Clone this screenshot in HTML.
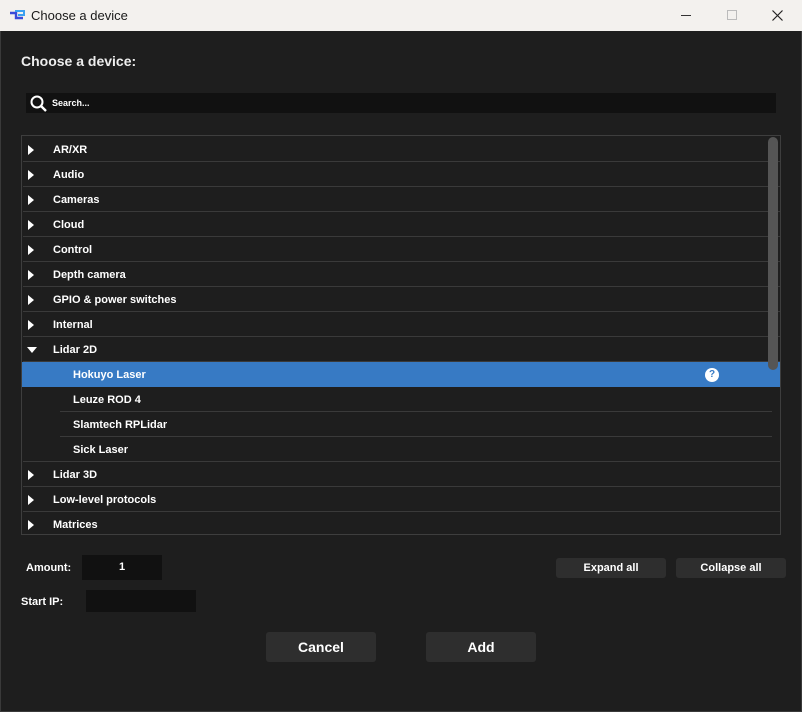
<!DOCTYPE html>
<html><head><style>
*{margin:0;padding:0;box-sizing:border-box}
body{width:802px;height:712px;background:#1e1e1e;font-family:"Liberation Sans",sans-serif;position:relative;overflow:hidden;color:#fff}
.title{position:absolute;left:0;top:0;width:802px;height:31px;background:#f3f1ee;color:#1a1a1a;font-size:13px}
.abs{position:absolute}
.row{position:absolute;left:23px;width:757px;height:25px;border-bottom:1px solid #3a3a3a;font-size:11px;font-weight:bold;line-height:27px}
.row span{position:absolute;left:30px}
.tri{position:absolute;left:5px;top:8px;width:0;height:0;border-top:5px solid transparent;border-bottom:5px solid transparent;border-left:6px solid #fff}
.sub{left:60px;width:712px}
.sub span{left:13px}
.btn{position:absolute;background:#2e2e2e;border-radius:3px;font-size:11px;font-weight:bold;text-align:center}
</style></head><body>
<div class="title">
 <svg class="abs" style="left:9px;top:9px" width="16" height="11" viewBox="0 0 16 11"><path d="M1 4h6v5h7" stroke="#3a4bd8" stroke-width="2.4" fill="none"/><path d="M6 2h9v4H9" stroke="#3aa0f0" stroke-width="2" fill="none"/></svg>
 <div class="abs" style="left:31px;top:8px">Choose a device</div>
 <div class="abs" style="left:681px;top:15px;width:10px;height:1px;background:#333"></div>
 <div class="abs" style="left:727px;top:10px;width:10px;height:10px;border:1px solid #bbb"></div>
 <svg class="abs" style="left:772px;top:10px" width="11" height="11"><path d="M0.5 0.5l10 10M10.5 0.5l-10 10" stroke="#222" stroke-width="1.2"/></svg>
</div>
<div class="abs" style="left:0;top:31px;width:802px;height:681px;border:1px solid #3a3a3a;border-top:none"></div>
<div class="abs" style="left:21px;top:53px;font-size:14px;font-weight:bold;color:#eee">Choose a device:</div>
<div class="abs" style="left:26px;top:93px;width:750px;height:20px;background:#111"></div>
<svg class="abs" style="left:30px;top:95px" width="18" height="17"><circle cx="7" cy="7" r="5.5" stroke="#fff" stroke-width="2" fill="none"/><path d="M11 11l5 5" stroke="#fff" stroke-width="2.4"/></svg>
<div class="abs" style="left:52px;top:98px;font-size:9px;font-weight:bold">Search...</div>
<div class="abs" style="left:21px;top:135px;width:760px;height:400px;border:1px solid #3e3e3e"></div>
<div class="row" style="top:137px"><i class="tri"></i><span>AR/XR</span></div>
<div class="row" style="top:162px"><i class="tri"></i><span>Audio</span></div>
<div class="row" style="top:187px"><i class="tri"></i><span>Cameras</span></div>
<div class="row" style="top:212px"><i class="tri"></i><span>Cloud</span></div>
<div class="row" style="top:237px"><i class="tri"></i><span>Control</span></div>
<div class="row" style="top:262px"><i class="tri"></i><span>Depth camera</span></div>
<div class="row" style="top:287px"><i class="tri"></i><span>GPIO &amp; power switches</span></div>
<div class="row" style="top:312px"><i class="tri"></i><span>Internal</span></div>
<div class="row" style="top:337px"><i class="abs" style="left:4px;top:10px;border-left:5px solid transparent;border-right:5px solid transparent;border-top:6px solid #fff"></i><span>Lidar 2D</span></div>
<div class="row" style="top:362px;left:22px;width:758px;background:#377ac4;border:none"><span style="left:51px">Hokuyo Laser</span>
 <div class="abs" style="left:683px;top:6px;width:14px;height:14px;border-radius:50%;background:#fff;color:#377ac4;font-size:10px;line-height:14px;text-align:center">?</div></div>
<div class="row sub" style="top:387px"><span>Leuze ROD 4</span></div>
<div class="row sub" style="top:412px"><span>Slamtech RPLidar</span></div>
<div class="row" style="top:437px"><span style="left:50px">Sick Laser</span></div>
<div class="row" style="top:462px"><i class="tri"></i><span>Lidar 3D</span></div>
<div class="row" style="top:487px"><i class="tri"></i><span>Low-level protocols</span></div>
<div class="row" style="top:512px;border:none"><i class="tri"></i><span>Matrices</span></div>
<div class="abs" style="left:768px;top:137px;width:10px;height:233px;background:#555;border-radius:5px"></div>
<div class="abs" style="left:26px;top:562px;font-size:11px;font-weight:bold">Amount:</div>
<div class="abs" style="left:82px;top:555px;width:80px;height:25px;background:#111;font-size:11px;font-weight:bold;text-align:center;line-height:25px">1</div>
<div class="abs" style="left:21px;top:596px;font-size:11px;font-weight:bold">Start IP:</div>
<div class="abs" style="left:86px;top:590px;width:110px;height:22px;background:#111"></div>
<div class="btn" style="left:556px;top:558px;width:110px;height:20px;line-height:21px">Expand all</div>
<div class="btn" style="left:676px;top:558px;width:110px;height:20px;line-height:21px">Collapse all</div>
<div class="btn" style="left:266px;top:632px;width:110px;height:30px;line-height:30px;font-size:14px">Cancel</div>
<div class="btn" style="left:426px;top:632px;width:110px;height:30px;line-height:30px;font-size:14px">Add</div>
</body></html>
